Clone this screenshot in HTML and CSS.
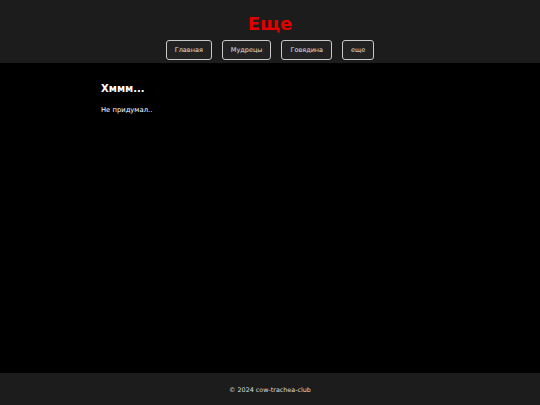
FILE: index.html
```html
<!DOCTYPE html>
<html lang="ru">
<head>
<meta charset="utf-8">
<title>Еще</title>
<link rel="stylesheet" href="styles.css">
</head>
<body>
<header class="site-header">
  <h1 class="site-title">Еще</h1>
  <nav class="nav">
    <a class="nav-btn" href="#">Главная</a>
    <a class="nav-btn" href="#">Мудрецы</a>
    <a class="nav-btn" href="#">Говядина</a>
    <a class="nav-btn" href="#">еще</a>
  </nav>
</header>
<main class="content">
  <h2 class="content-title">Хммм...</h2>
  <p class="content-text">Не придумал..</p>
</main>
<footer class="site-footer">
  <p class="footer-text">© 2024 cow-trachea-club</p>
</footer>
</body>
</html>
```
FILE: styles.css
```css
* { box-sizing: border-box; }
html, body { height: 100%; }
body {
  margin: 0;
  background: #000;
  color: #fff;
  font-family: "Comic Sans MS", "DejaVu Sans", sans-serif;
  display: flex;
  flex-direction: column;
}
.site-header {
  background: #1c1c1c;
  height: 63px;
  display: flex;
  flex-direction: column;
  align-items: center;
  padding-top: 11px;
}
.site-title {
  margin: 0;
  color: #e00000;
  font-size: 18px;
  line-height: 25px;
  font-weight: bold;
}
.nav {
  display: flex;
  gap: 10px;
  margin-top: 4px;
}
.nav-btn {
  display: flex;
  align-items: center;
  justify-content: center;
  height: 20px;
  padding: 0 8px;
  border: 1px solid #c8c8c8;
  border-radius: 3px;
  background: #222;
  color: #e0e0e0;
  font-size: 6.5px;
  text-decoration: none;
}
.content {
  flex: 1;
  width: 338px;
  margin: 0 auto;
  padding-top: 19px;
}
.content-title {
  margin: 0;
  font-size: 10px;
  line-height: 14px;
  font-weight: bold;
}
.content-text {
  margin: 9px 0 0;
  font-size: 6.8px;
  line-height: 10px;
}
.site-footer {
  background: #1c1c1c;
  height: 32px;
  display: flex;
  align-items: center;
  justify-content: center;
}
.footer-text {
  margin: 0;
  font-size: 6.4px;
  color: #ddd;
  padding-top: 2px;
}
```
